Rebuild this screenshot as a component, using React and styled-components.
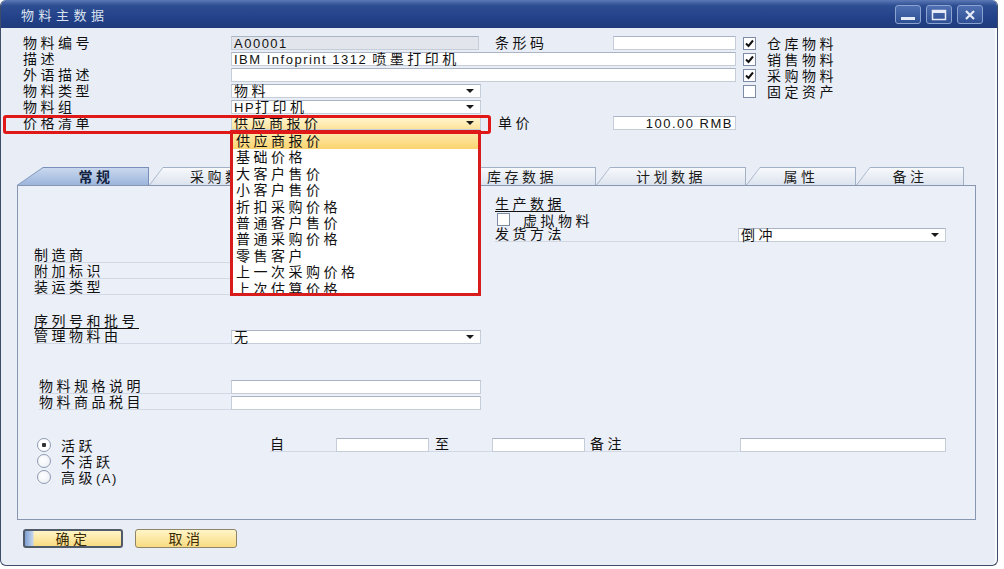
import React from "react"
import styled, { createGlobalStyle } from "styled-components"

const GlobalStyle = createGlobalStyle`
  html, body {
    margin: 0;
    padding: 0;
    background: #fff;
  }
  body {
    font-family: "Liberation Sans", "Noto Sans CJK SC", sans-serif;
    font-size: 14px;
    letter-spacing: 3.5px;
    color: #111;
  }
`

const priceLists = [
  "供应商报价",
  "基础价格",
  "大客户售价",
  "小客户售价",
  "折扣采购价格",
  "普通客户售价",
  "普通采购价格",
  "零售客户",
  "上一次采购价格",
  "上次估算价格",
]

const tabs = [
  { name: "常规", w: 132, slant: 26, active: true },
  { name: "采购数据", w: 152, slant: 14 },
  { name: "销售数据", w: 147, slant: 14 },
  { name: "库存数据", w: 148, slant: 14 },
  { name: "计划数据", w: 150, slant: 14 },
  { name: "属性", w: 110, slant: 14 },
  { name: "备注", w: 108, slant: 14 },
]

function Check({ on }) {
  return (
    <CheckBox>
      {on && (
        <svg width="11" height="11" viewBox="0 0 11 11">
          <path d="M2 5.5 L4.5 8 L9 2.5" fill="none" stroke="#111" strokeWidth="2" />
        </svg>
      )}
    </CheckBox>
  )
}

function Dropdown({ children, w, hot, popup }) {
  return (
    <Select $w={w} $hot={hot}>
      <span>{children}</span>
      <Arrow />
      {popup}
    </Select>
  )
}

export default function App() {
  return (
    <>
      <GlobalStyle />
      <Window>
        <TitleBar>
          <Title>物料主数据</Title>
          <WinControls>
            <WinButton>
              <svg width="16" height="12" viewBox="0 0 16 12">
                <rect x="1" y="8" width="14" height="3" fill="#e6ecf7" />
              </svg>
            </WinButton>
            <WinButton>
              <svg width="16" height="12" viewBox="0 0 16 12">
                <rect x="1.5" y="1.5" width="13" height="9" fill="none" stroke="#e6ecf7" strokeWidth="1.5" />
                <rect x="1" y="1" width="14" height="3" fill="#e6ecf7" />
              </svg>
            </WinButton>
            <WinButton>
              <svg width="16" height="12" viewBox="0 0 16 12">
                <path d="M4 2 L12 10 M12 2 L4 10" stroke="#e6ecf7" strokeWidth="2.2" />
              </svg>
            </WinButton>
          </WinControls>
        </TitleBar>

        <TopForm>
          <Label>物料编号</Label>
          <Input $w={248} $disabled>
            <Lat>A00001</Lat>
          </Input>
          <Label $indent={14}>条形码</Label>
          <Input />
          <CheckCell>
            <Check on />
            <span>仓库物料</span>
          </CheckCell>

          <Label>描述</Label>
          <Input $span="2 / 5">
            <Lat>IBM Infoprint 1312 </Lat>喷墨打印机
          </Input>
          <CheckCell>
            <Check on />
            <span>销售物料</span>
          </CheckCell>

          <Label>外语描述</Label>
          <Input $span="2 / 5" />
          <CheckCell>
            <Check on />
            <span>采购物料</span>
          </CheckCell>

          <Label>物料类型</Label>
          <Dropdown w={250}>物料</Dropdown>
          <Blank $span="3 / 5" />
          <CheckCell>
            <Check />
            <span>固定资产</span>
          </CheckCell>

          <Label>物料组</Label>
          <Dropdown w={250}>
            <Lat>HP</Lat>打印机
          </Dropdown>
          <Blank $span="3 / 6" />

          <Label>价格清单</Label>
          <Dropdown
            w={250}
            hot
            popup={
              <Popup>
                {priceLists.map((p, i) => (
                  <PopupItem key={p} $selected={i === 0}>
                    {p}
                  </PopupItem>
                ))}
              </Popup>
            }
          >
            供应商报价
          </Dropdown>
          <Label $indent={17}>单价</Label>
          <Input $right>
            <Lat>100.00 RMB</Lat>
          </Input>

          <Highlight />
        </TopForm>

        <TabArea>
          <TabStrip>
            {tabs.map((t) => (
              <TabShell key={t.name} $w={t.w} $slant={t.slant} $active={t.active}>
                <TabFace $slant={t.slant - 1} $active={t.active} $pad={t.active ? t.slant : 0}>
                  {t.name}
                </TabFace>
              </TabShell>
            ))}
          </TabStrip>

          <Panel>
            <PanelTop>
              <Column $top={52}>
                <FieldRow>
                  <RowLabel $w={197}>制造商</RowLabel>
                  <Dropdown w={250} />
                </FieldRow>
                <FieldRow>
                  <RowLabel $w={197}>附加标识</RowLabel>
                  <Input $w={250} />
                </FieldRow>
                <FieldRow>
                  <RowLabel $w={197}>装运类型</RowLabel>
                  <Dropdown w={250} />
                </FieldRow>
              </Column>
              <Column>
                <SectionHead>生产数据</SectionHead>
                <CheckRow>
                  <Check />
                  <span>虚拟物料</span>
                </CheckRow>
                <FieldRow>
                  <RowLabel $w={243}>发货方法</RowLabel>
                  <Dropdown w={208}>倒冲</Dropdown>
                </FieldRow>
              </Column>
            </PanelTop>

            <Section $top={17}>
              <SectionHead>序列号和批号</SectionHead>
              <FieldRow>
                <RowLabel $w={197}>管理物料由</RowLabel>
                <Dropdown w={250}>无</Dropdown>
              </FieldRow>
            </Section>

            <Section $top={34} $indent={5}>
              <FieldRow>
                <RowLabel $w={192}>物料规格说明</RowLabel>
                <Input $w={250} />
              </FieldRow>
              <FieldRow $h={17}>
                <RowLabel $w={192}>物料商品税目</RowLabel>
                <Input $w={250} />
              </FieldRow>
            </Section>

            <StatusArea>
              <RadioCol>
                <RadioRow>
                  <Radio $on />
                  <span>活跃</span>
                </RadioRow>
                <RadioRow>
                  <Radio />
                  <span>不活跃</span>
                </RadioRow>
                <RadioRow>
                  <Radio />
                  <span>
                    高级<Lat>(A)</Lat>
                  </span>
                </RadioRow>
              </RadioCol>
              <FieldRow>
                <RowLabel $w={66}>自</RowLabel>
                <Input $w={93} />
                <RowLabel $w={63} $indent={6}>至</RowLabel>
                <Input $w={93} />
                <RowLabel $w={155} $indent={5}>备注</RowLabel>
                <Input $w={206} />
              </FieldRow>
            </StatusArea>
          </Panel>
        </TabArea>

        <ButtonBar>
          <Button $w={100} $primary>确定</Button>
          <Button $w={102}>取消</Button>
        </ButtonBar>
      </Window>
    </>
  )
}

const Window = styled.div`
  width: 998px;
  height: 566px;
  box-sizing: border-box;
  border: 1px solid #3f4c69;
  border-top: none;
  border-radius: 6px;
  background: #e9eef6;
  box-shadow: inset -2px 0 0 #f6f8fb;
  display: flex;
  flex-direction: column;
  overflow: hidden;
`

const TitleBar = styled.div`
  flex: none;
  height: 28px;
  display: flex;
  align-items: center;
  justify-content: space-between;
  padding: 0 14px 0 20px;
  background: linear-gradient(#5b79b6 0%, #2e4e92 20%, #23428a 60%, #1f3b7c 100%);
`

const Title = styled.div`
  color: #dbe2ef;
  font-size: 13px;
  letter-spacing: 4.5px;
`

const WinControls = styled.div`
  display: flex;
  gap: 5px;
  padding-top: 1px;
`

const WinButton = styled.div`
  width: 26px;
  height: 19px;
  box-sizing: border-box;
  border: 1px solid #8ba3d0;
  border-radius: 3px;
  background: linear-gradient(#4f6fb2, #2f4f94);
  display: flex;
  align-items: center;
  justify-content: center;
`

const Lat = styled.span`
  font-size: 13px;
  letter-spacing: 1.5px;
`

const TopForm = styled.div`
  position: relative;
  margin: 7px 0 0 22px;
  display: grid;
  grid-template-columns: 208px 250px 132px 123px 1fr;
  grid-auto-rows: 16px;
`

const Label = styled.div`
  line-height: 16px;
  white-space: nowrap;
  padding-left: ${(p) => p.$indent || 0}px;
`

const Blank = styled.div`
  grid-column: ${(p) => p.$span};
`

const Input = styled.div`
  flex: none;
  height: 14px;
  margin-top: 1px;
  box-sizing: border-box;
  border: 1px solid #c5cdd9;
  border-top-color: #aab4c4;
  background: ${(p) => (p.$disabled ? "#e2e5eb" : "#fff")};
  line-height: 12px;
  padding: 0 2px;
  white-space: nowrap;
  text-align: ${(p) => (p.$right ? "right" : "left")};
  grid-column: ${(p) => p.$span || "auto"};
  width: ${(p) => (p.$w ? `${p.$w}px` : "auto")};
`

const Select = styled(Input)`
  position: relative;
  display: flex;
  align-items: center;
  justify-content: space-between;
  background: ${(p) => (p.$hot ? "linear-gradient(#fff6d2, #fde39a)" : "#fff")};
`

const Arrow = styled.span`
  flex: none;
  width: 0;
  height: 0;
  margin-right: 4px;
  border-left: 4px solid transparent;
  border-right: 4px solid transparent;
  border-top: 4px solid #1a1a1a;
`

const Highlight = styled.div`
  position: absolute;
  left: -20px;
  top: 80px;
  width: 488px;
  height: 19px;
  box-sizing: border-box;
  border: 3px solid #e01818;
  border-radius: 3px;
  z-index: 6;
  pointer-events: none;
`

const Popup = styled.div`
  position: absolute;
  left: -2px;
  top: 13px;
  width: 251px;
  height: 166px;
  box-sizing: border-box;
  border: 3px solid #d81b1b;
  background: #fff;
  overflow: hidden;
  z-index: 5;
`

const PopupItem = styled.div`
  height: 16.4px;
  line-height: 16.4px;
  padding-left: 3px;
  white-space: nowrap;
  background: ${(p) => (p.$selected ? "linear-gradient(#fde9ab, #fbd46f)" : "transparent")};
`

const CheckCell = styled.div`
  display: flex;
  align-items: center;
  gap: 11px;
  padding-left: 7px;
  white-space: nowrap;
`

const CheckBox = styled.span`
  flex: none;
  width: 13px;
  height: 13px;
  box-sizing: border-box;
  border: 1px solid #7d8ca3;
  background: #fff;
  display: flex;
  align-items: center;
  justify-content: center;
`

const TabArea = styled.div`
  margin: 36px 0 0 16px;
  width: 959px;
`

const TabStrip = styled.div`
  display: flex;
  height: 18px;
`

const TabShell = styled.div`
  flex: none;
  width: ${(p) => p.$w}px;
  height: 18px;
  box-sizing: border-box;
  padding: 1px 1px 0 1px;
  background: ${(p) => (p.$active ? "#7890b9" : "#a3b1c6")};
  clip-path: polygon(${(p) => p.$slant}px 0, 100% 0, 100% 100%, 0 100%);
`

const TabFace = styled.div`
  height: 100%;
  box-sizing: border-box;
  padding-left: ${(p) => p.$pad}px;
  display: flex;
  align-items: center;
  justify-content: center;
  line-height: 1;
  color: ${(p) => (p.$active ? "#13233f" : "#1c1c1c")};
  font-weight: ${(p) => (p.$active ? 600 : 400)};
  background: ${(p) =>
    p.$active ? "linear-gradient(#c9d8ee, #9cb5dc)" : "linear-gradient(#f7f9fc, #dce3ee)"};
  clip-path: polygon(${(p) => p.$slant}px 0, 100% 0, 100% 100%, 0 100%);
`

const Panel = styled.div`
  height: 335px;
  box-sizing: border-box;
  border: 1px solid #8797b2;
  background: #ebeff7;
  padding: 10px 0 0 16px;
`

const PanelTop = styled.div`
  display: grid;
  grid-template-columns: 461px 451px;
`

const Column = styled.div`
  padding-top: ${(p) => p.$top || 0}px;
`

const Section = styled.div`
  margin-top: ${(p) => p.$top}px;
  padding-left: ${(p) => p.$indent || 0}px;
`

const SectionHead = styled.div`
  height: 16px;
  line-height: 16px;
  text-decoration: underline;
  text-underline-offset: 2px;
`

const FieldRow = styled.div`
  display: flex;
  height: ${(p) => p.$h || 16}px;
`

const RowLabel = styled.div`
  flex: none;
  width: ${(p) => p.$w}px;
  height: 15px;
  line-height: 15px;
  box-sizing: border-box;
  padding-left: ${(p) => p.$indent || 0}px;
  border-bottom: 1px solid #d2d9e4;
  white-space: nowrap;
`

const CheckRow = styled.div`
  display: flex;
  align-items: center;
  gap: 13px;
  height: 15px;
  padding-left: 2px;
`

const StatusArea = styled.div`
  display: flex;
  margin-top: 25px;
`

const RadioCol = styled.div`
  flex: none;
  width: 236px;
  box-sizing: border-box;
  padding-left: 3px;
`

const RadioRow = styled.div`
  display: flex;
  align-items: center;
  gap: 10px;
  height: 16px;
`

const Radio = styled.span`
  flex: none;
  width: 14px;
  height: 14px;
  box-sizing: border-box;
  border-radius: 50%;
  border: 1px solid #8e9bb1;
  background: ${(p) =>
    p.$on
      ? "radial-gradient(circle, #333 0 2px, #fff 2.5px)"
      : "radial-gradient(circle at 40% 40%, #fff, #e8ecf2)"};
`

const ButtonBar = styled.div`
  display: flex;
  gap: 12px;
  margin: 9px 0 0 22px;
`

const Button = styled.div`
  width: ${(p) => p.$w}px;
  height: 19px;
  box-sizing: border-box;
  border: ${(p) => (p.$primary ? "2px solid #515a68" : "1px solid #8e8468")};
  border-radius: 3px;
  background: ${(p) =>
    p.$primary
      ? "linear-gradient(90deg, #7e9fd3 0, #c3d4ee 8px, transparent 9px), linear-gradient(#fff5c8, #f9dc82)"
      : "linear-gradient(#fff5c8, #f9dc82)"};
  display: flex;
  align-items: center;
  justify-content: center;
  color: #3a2b06;
  line-height: 1;
`
